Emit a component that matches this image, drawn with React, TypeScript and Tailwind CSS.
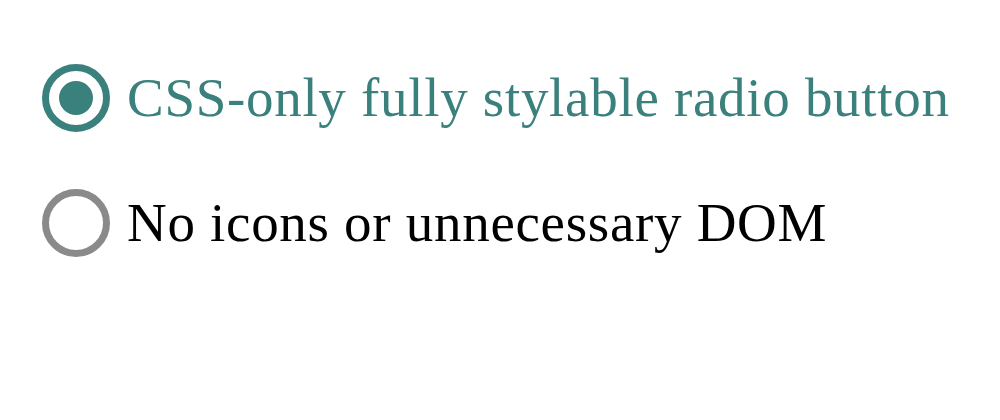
import { useState } from "react";

const options = [
  { id: "css", label: "CSS-only fully stylable radio button" },
  { id: "dom", label: "No icons or unnecessary DOM" },
];

export default function App() {
  const [selected, setSelected] = useState("css");

  return (
    <div className="w-[1000px] h-[420px] bg-white pt-[64px] pl-[42px] font-['Liberation_Serif',serif]">
      <div className="flex flex-col gap-[57px]">
        {options.map((opt) => {
          const checked = selected === opt.id;
          return (
            <label
              key={opt.id}
              className={`flex items-center gap-[17px] cursor-pointer text-[55px] leading-[68px] tracking-[0.7px] ${
                checked ? "text-[#3a807c]" : "text-black"
              }`}
            >
              <input
                type="radio"
                name="demo"
                checked={checked}
                onChange={() => setSelected(opt.id)}
                className="sr-only"
              />
              <span
                className={`flex items-center justify-center w-[68px] h-[68px] rounded-full border-[7px] shrink-0 ${
                  checked ? "border-[#3a807c]" : "border-[#8a8a8a]"
                }`}
              >
                {checked && <span className="w-[34px] h-[34px] rounded-full bg-[#3a807c]" />}
              </span>
              <span>{opt.label}</span>
            </label>
          );
        })}
      </div>
    </div>
  );
}
